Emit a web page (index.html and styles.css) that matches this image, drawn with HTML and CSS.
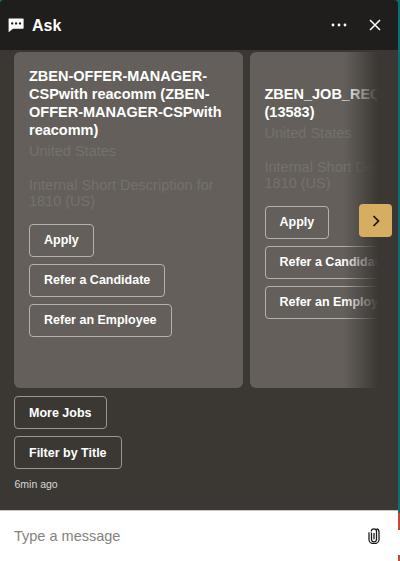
FILE: index.html
```html
<!DOCTYPE html>
<html lang="en">
<head>
<meta charset="utf-8">
<title>Ask</title>
<link rel="stylesheet" href="styles.css">
</head>
<body>
<div class="side-strip"></div>
<main class="chat">
  <header class="chat-header">
    <svg class="icon-chat" viewBox="0 0 16 16" width="16" height="16"><path fill="#fff" fill-rule="evenodd" d="M1 1.5h14a.6.6 0 0 1 .6.6v9a.6.6 0 0 1-.6.6H5L.6 15.2V2.1a.6.6 0 0 1 .4-.6zM4.2 5.2a1.2 1.2 0 1 0 0 2.4 1.2 1.2 0 0 0 0-2.4zm3.9 0a1.2 1.2 0 1 0 0 2.4 1.2 1.2 0 0 0 0-2.4zm3.9 0a1.2 1.2 0 1 0 0 2.4 1.2 1.2 0 0 0 0-2.4z"/></svg>
    <h1 class="chat-title">Ask</h1>
    <div class="header-actions">
      <svg class="icon-more" viewBox="0 0 16 4" width="16" height="4"><circle cx="2" cy="2" r="1.4" fill="#fff"/><circle cx="8" cy="2" r="1.4" fill="#fff"/><circle cx="14" cy="2" r="1.4" fill="#fff"/></svg>
      <svg class="icon-close" viewBox="0 0 12 12" width="12" height="12"><path d="M1 1l10 10M11 1L1 11" stroke="#fff" stroke-width="1.5" fill="none"/></svg>
    </div>
  </header>
  <section class="messages">
    <div class="carousel">
      <div class="viewport">
        <div class="cards">
          <article class="card">
            <h2 class="card-title">ZBEN-OFFER-MANAGER-CSPwith reacomm (ZBEN-OFFER-MANAGER-CSPwith reacomm)</h2>
            <p class="card-meta">United States</p>
            <p class="card-meta card-desc">Internal Short Description for 1810 (US)</p>
            <div class="actions">
              <button class="btn">Apply</button>
              <button class="btn">Refer a Candidate</button>
              <button class="btn">Refer an Employee</button>
            </div>
          </article>
          <article class="card">
            <h2 class="card-title">ZBEN_JOB_REQ<br>(13583)</h2>
            <p class="card-meta">United States</p>
            <p class="card-meta card-desc">Internal Short Description for 1810 (US)</p>
            <div class="actions">
              <button class="btn">Apply</button>
              <button class="btn">Refer a Candidate</button>
              <button class="btn">Refer an Employee</button>
            </div>
          </article>
        </div>
        <div class="fade"></div>
      </div>
      <button class="next" aria-label="Next">
        <svg viewBox="0 0 8 12" width="8" height="12"><path d="M1.5 1l5 5-5 5" stroke="#161513" stroke-width="1.7" fill="none"/></svg>
      </button>
    </div>
    <div class="global-actions">
      <button class="btn btn-dark">More Jobs</button>
      <button class="btn btn-dark">Filter by Title</button>
    </div>
    <div class="timestamp">6min ago</div>
  </section>
  <footer class="composer">
    <span class="placeholder">Type a message</span>
    <svg class="icon-clip" viewBox="0 0 12 16" width="12" height="16"><path d="M3.5 4.5v6.8a2.5 2.5 0 0 0 5 0V3.4a2.6 2.6 0 0 0-5.2 0M1 4.2v7.6a5 3.9 0 0 0 10 0V4.2a2.5 3.4 0 0 0-2.4-3.3M6 5v6.3" stroke="#161513" stroke-width="1.25" fill="none"/></svg>
  </footer>
</main>
</body>
</html>
```
FILE: styles.css
```css
* { box-sizing: border-box; }
html, body { margin: 0; height: 100%; }
body {
  width: 400px;
  height: 561px;
  overflow: hidden;
  background: #0f6e70;
  position: relative;
  font-family: "Liberation Sans", Arial, sans-serif;
}
.side-strip {
  position: absolute;
  top: 0;
  right: 0;
  bottom: 0;
  width: 2px;
  background: linear-gradient(#0f6e70 0 513px, #c74634 513px 530px, #fff 530px 555px, #c74634 555px);
}
.chat {
  width: 398px;
  height: 561px;
  display: flex;
  flex-direction: column;
  position: relative;
}
.chat-header {
  height: 50px;
  background: #201e1c;
  border-radius: 4px 4px 0 0;
  display: flex;
  align-items: center;
  padding: 0 17px 0 8px;
  flex: none;
}
.icon-chat { flex: none; }
.chat-title {
  margin: 1px 0 0 8px;
  font-size: 16px;
  font-weight: 700;
  color: #fff;
}
.header-actions {
  margin-left: auto;
  display: flex;
  align-items: center;
  gap: 22px;
}
.messages {
  flex: 1;
  background: #3b3833;
  display: flex;
  flex-direction: column;
  min-height: 0;
  padding-top: 2px;
}
.carousel {
  position: relative;
  height: 337px;
  flex: none;
}
.viewport {
  position: relative;
  width: 378px;
  height: 100%;
  overflow: hidden;
}
.cards {
  display: flex;
  gap: 6.5px;
  padding-left: 14px;
  height: 100%;
}
.card {
  flex: none;
  width: 229px;
  height: 336px;
  background: #645f5a;
  border-radius: 6px;
  padding: 15px 15px 51.5px;
  display: flex;
  flex-direction: column;
  justify-content: center;
}
.card-title {
  margin: 0;
  font-size: 14.5px;
  line-height: 18px;
  font-weight: 700;
  color: #fff;
}
.card-meta {
  margin: 4px 0 0;
  font-size: 14.5px;
  line-height: 16.5px;
  color: #75716c;
}
.card-desc { margin-top: 17px; }
.actions {
  display: flex;
  flex-direction: column;
  align-items: flex-start;
  gap: 7px;
  margin-top: 14px;
}
.btn {
  height: 33px;
  padding: 0 14px;
  background: transparent;
  border: 1px solid #b5b2ae;
  border-radius: 4px;
  color: #fff;
  font: 700 12.5px "Liberation Sans", Arial, sans-serif;
  white-space: nowrap;
}
.btn-dark { border-color: #99958f; }
.fade {
  position: absolute;
  top: 0;
  right: 0;
  bottom: 0;
  width: 34px;
  background: linear-gradient(to right, rgba(59,56,51,0), #3b3833);
}
.next {
  position: absolute;
  left: 359px;
  top: 152px;
  width: 33px;
  height: 33px;
  padding: 0;
  border: 0;
  border-radius: 4px;
  background: #d5ae61;
  display: flex;
  align-items: center;
  justify-content: center;
}
.global-actions {
  display: flex;
  flex-direction: column;
  align-items: flex-start;
  gap: 7px;
  padding-left: 14px;
  margin-top: 7px;
}
.timestamp {
  margin: 8px 0 0 14.5px;
  font-size: 10.5px;
  line-height: 14px;
  color: #d8d6d3;
}
.composer {
  height: 51px;
  flex: none;
  background: #fff;
  border-top: 1px solid #c8c6c3;
  display: flex;
  align-items: center;
  justify-content: space-between;
  padding: 0 18px 0 14px;
}
.placeholder {
  font-size: 14.5px;
  color: #85817d;
}
```
